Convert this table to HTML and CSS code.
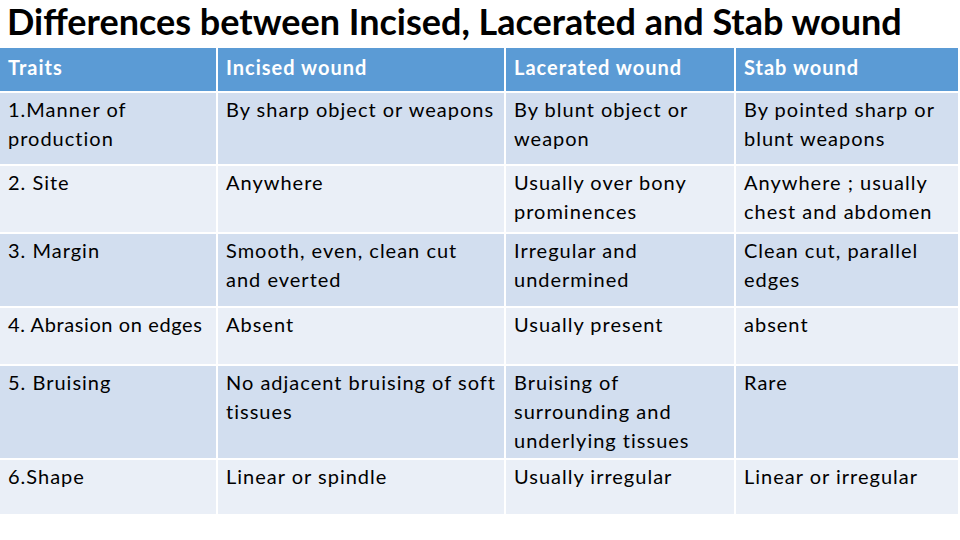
FILE: index.html
```html
<!DOCTYPE html>
<html>
<head>
<meta charset="utf-8">
<link rel="stylesheet" href="styles.css">
</head>
<body>
<h1 class="title">Differences between Incised, Lacerated and Stab wound</h1>
<div class="table">
  <div class="cell head">Traits</div>
  <div class="cell head">Incised wound</div>
  <div class="cell head">Lacerated wound</div>
  <div class="cell head">Stab wound</div>

  <div class="cell dark">1.Manner of production</div>
  <div class="cell dark">By sharp object or weapons</div>
  <div class="cell dark">By blunt object or weapon</div>
  <div class="cell dark">By pointed sharp or blunt weapons</div>

  <div class="cell light">2. Site</div>
  <div class="cell light">Anywhere</div>
  <div class="cell light">Usually over bony prominences</div>
  <div class="cell light">Anywhere ; usually chest and abdomen</div>

  <div class="cell dark">3. Margin</div>
  <div class="cell dark">Smooth, even, clean cut and everted</div>
  <div class="cell dark">Irregular and undermined</div>
  <div class="cell dark">Clean cut, parallel edges</div>

  <div class="cell light nowrap">4. Abrasion on edges</div>
  <div class="cell light">Absent</div>
  <div class="cell light">Usually present</div>
  <div class="cell light">absent</div>

  <div class="cell dark">5. Bruising</div>
  <div class="cell dark">No adjacent bruising of soft tissues</div>
  <div class="cell dark">Bruising of surrounding and underlying tissues</div>
  <div class="cell dark">Rare</div>

  <div class="cell light">6.Shape</div>
  <div class="cell light">Linear or spindle</div>
  <div class="cell light">Usually irregular</div>
  <div class="cell light">Linear or irregular</div>
</div>
</body>
</html>
```

FILE: styles.css
```css
html, body {
  margin: 0;
  padding: 0;
  background: #ffffff;
}
body {
  width: 960px;
  height: 540px;
  overflow: hidden;
  font-family: "Lato", "Open Sans", sans-serif;
}
.title {
  margin: 0;
  height: 48px;
  padding-left: 7px;
  font-family: "Lato", sans-serif;
  font-weight: 700;
  font-size: 36px;
  line-height: 42px;
  letter-spacing: 0;
  color: #000000;
  white-space: nowrap;
}
.table {
  display: grid;
  grid-template-columns: 216px 286px 228px 222px;
  grid-template-rows: 43px 71px 66px 72px 56px 92px 54px;
  gap: 2px;
}
.cell {
  padding: 2px 6px 0 8px;
  font-size: 20px;
  line-height: 29px;
  letter-spacing: 1px;
  color: #000000;
}
.nowrap {
  white-space: nowrap;
  letter-spacing: 0.6px;
  padding-right: 0;
}
.head {
  background: #5b9bd5;
  color: #ffffff;
  font-weight: 700;
  padding-top: 5px;
}
.dark {
  background: #d2deef;
}
.light {
  background: #eaeff7;
}
```
